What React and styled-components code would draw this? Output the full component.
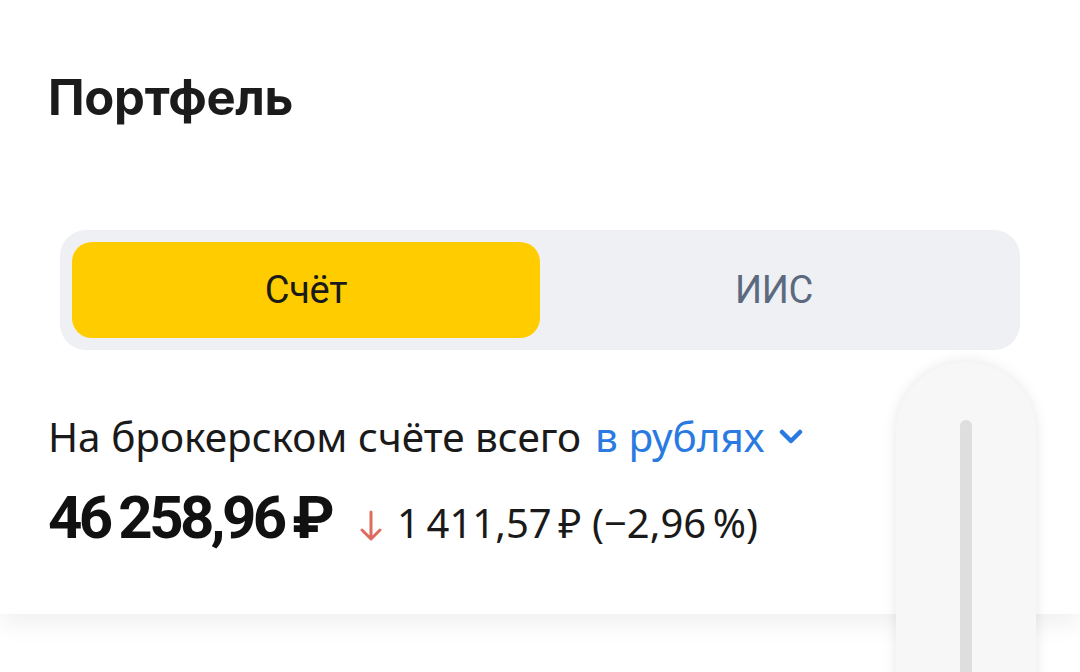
import React from "react";
import styled, { createGlobalStyle } from "styled-components";

const Global = createGlobalStyle`
  html, body { margin: 0; padding: 0; background: #ffffff; }
  body { width: 1080px; height: 672px; overflow: hidden; font-family: "Noto Sans", "Open Sans", sans-serif; color: #1a1a1a; }
  #root { position: relative; width: 1080px; height: 672px; overflow: hidden; }
`;

const Card = styled.section`
  background: #ffffff;
  height: 614px;
  box-sizing: border-box;
  padding: 69px 0 0 0;
  box-shadow: 0 12px 22px rgba(0, 0, 0, 0.055);
  position: relative;
  z-index: 1;
`;

const Title = styled.h1`
  margin: 0 0 0 48px;
  font-family: "Inter", "Noto Sans", sans-serif;
  font-weight: 700;
  font-size: 49px;
  line-height: 58px;
  letter-spacing: -0.3px;
  color: #1b1b1b;
`;

const Segmented = styled.div`
  margin: 103px 60px 0 60px;
  height: 120px;
  box-sizing: border-box;
  padding: 12px;
  border-radius: 26px;
  background: #eef0f4;
  display: grid;
  grid-template-columns: 468px 1fr;
`;

const Segment = styled.div`
  display: flex;
  align-items: center;
  justify-content: center;
  border-radius: 20px;
  background: ${(p) => (p.$active ? "#ffcc00" : "transparent")};
  color: ${(p) => (p.$active ? "#1a1a1a" : "#5b6a7e")};
  font-family: "Roboto", "Noto Sans", sans-serif;
  font-size: 38px;
  letter-spacing: -0.3px;
`;

const Info = styled.div`
  margin: 62px 0 0 48px;
  display: flex;
  flex-direction: column;
`;

const Label = styled.div`
  display: flex;
  align-items: center;
  font-size: 40.5px;
  line-height: 50px;
  color: #1a1a1a;
  gap: 14px;
`;

const Currency = styled.span`
  color: #2a7ae2;
  display: inline-flex;
  align-items: center;
  gap: 14px;
`;

const Totals = styled.div`
  display: flex;
  align-items: baseline;
  margin-top: 26px;
`;

const Amount = styled.span`
  font-family: "Roboto", "Noto Sans", sans-serif;
  font-weight: 700;
  font-size: 60px;
  letter-spacing: -3.6px;
  line-height: 60px;
  color: #111111;
`;

const Change = styled.span`
  display: inline-flex;
  align-items: baseline;
  margin-left: 28px;
  font-size: 40px;
  letter-spacing: -0.3px;
  color: #1a1a1a;
  gap: 14px;
`;

const Arrow = styled.svg`
  width: 24px;
  height: 32px;
  align-self: center;
  transform: translateY(3px);
`;

const Thumb = styled.div`
  position: absolute;
  left: 896px;
  top: 362px;
  width: 140px;
  height: 360px;
  border-radius: 70px 70px 0 0;
  background: #f7f7f7;
  box-shadow: 0 0 14px rgba(0, 0, 0, 0.1);
  z-index: 5;
`;

const ThumbLine = styled.div`
  position: absolute;
  left: 64px;
  top: 58px;
  width: 12px;
  bottom: 0;
  border-radius: 6px 6px 0 0;
  background: #dedede;
`;

export default function App() {
  return (
    <>
      <Global />
      <Card>
        <Title>Портфель</Title>
        <Segmented>
          <Segment $active>Счёт</Segment>
          <Segment>ИИС</Segment>
        </Segmented>
        <Info>
          <Label>
            На брокерском счёте всего
            <Currency>
              в рублях
              <svg width="24" height="16" viewBox="0 0 24 16">
                <path d="M3 3 L12 12 L21 3" fill="none" stroke="#2a7ae2" strokeWidth="4.5" strokeLinecap="round" strokeLinejoin="round" />
              </svg>
            </Currency>
          </Label>
          <Totals>
            <Amount>46{"\u2009"}258,96{"\u2009"}₽</Amount>
            <Change>
              <Arrow viewBox="0 0 24 32">
                <path d="M12 2 V29 M3 20 L12 29 L21 20" fill="none" stroke="#de6b5e" strokeWidth="3" strokeLinecap="round" strokeLinejoin="round" />
              </Arrow>
              <span>1{"\u202F"}411,57{"\u202F"}₽ (−2,96{"\u202F"}%)</span>
            </Change>
          </Totals>
        </Info>
      </Card>
      <Thumb>
        <ThumbLine />
      </Thumb>
    </>
  );
}
